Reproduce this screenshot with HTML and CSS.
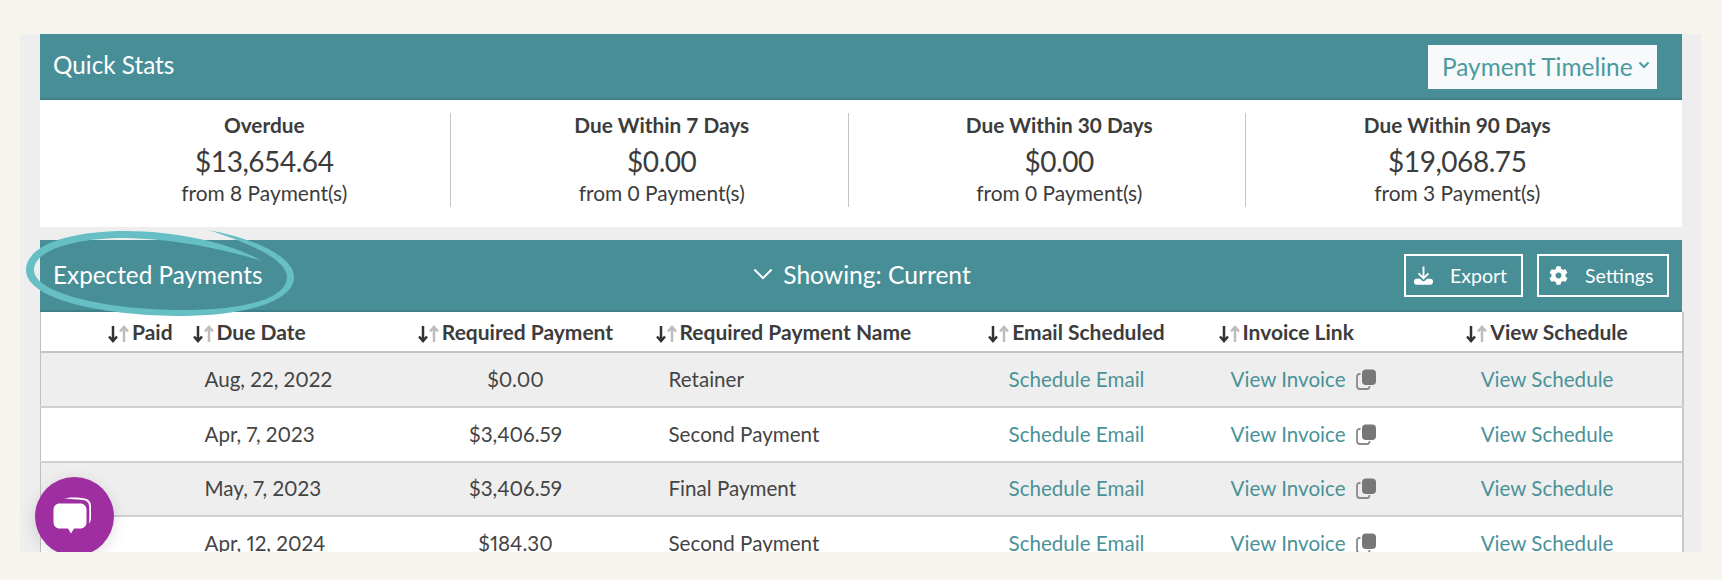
FILE: index.html
```html
<!DOCTYPE html>
<html lang="en">
<head>
<meta charset="utf-8">
<title>Quick Stats</title>
<link rel="stylesheet" href="styles.css">
</head>
<body>
<svg width="0" height="0" class="defs" aria-hidden="true">
  <symbol id="sort" viewBox="0 0 22 18">
    <path class="sort-down" d="M5 1v15M1 11.500 5 16l4-4.500"/>
    <path class="sort-up" d="M16 17V2M12 6.500 16 2l4 4.500"/>
  </symbol>
  <symbol id="copy" viewBox="0 0 21 21">
    <path class="copy-back" d="M4.500 5H3.500A2.500 2.500 0 0 0 1 7.500V17a3 3 0 0 0 3 3h7a2.500 2.500 0 0 0 2.500-2.500V17"/>
    <rect class="copy-front" x="6" y="0.500" width="14" height="15.500" rx="4"/>
  </symbol>
</svg>
<main class="panel">
  <section class="band band-stats">
    <h2 class="band-title">Quick Stats</h2>
    <button class="timeline">Payment Timeline
      <svg class="timeline-chevron" viewBox="0 0 12 8"><path d="M1.500 1.500 6 6l4.500-4.500"/></svg>
    </button>
  </section>
  <section class="stats">
    <div class="stat"><strong>Overdue</strong><span class="amount">$13,654.64</span><span class="from">from 8 Payment(s)</span></div>
    <div class="stat"><strong>Due Within 7 Days</strong><span class="amount">$0.00</span><span class="from">from 0 Payment(s)</span></div>
    <div class="stat"><strong>Due Within 30 Days</strong><span class="amount">$0.00</span><span class="from">from 0 Payment(s)</span></div>
    <div class="stat"><strong>Due Within 90 Days</strong><span class="amount">$19,068.75</span><span class="from">from 3 Payment(s)</span></div>
  </section>
  <section class="band band-payments">
    <h2 class="band-title">Expected Payments</h2>
    <div class="showing">
      <svg class="showing-chevron" viewBox="0 0 22 13"><path d="M1.500 1.500 11 11l9.500-9.500"/></svg>
      Showing: Current
    </div>
    <div class="actions">
      <button class="action action-export">
        <svg class="action-icon" viewBox="0 0 20 20"><path class="dl-arrow" d="M10 0.500V12.500M4.800 7.800 10 13l5.200-5.200"/><path class="dl-tray" d="M2.500 13.500H6.500C8 15.500 9 16 10 16s2-.5 3.500-2.500h4c1.300 0 2.500 1.100 2.500 2.800 0 2.200-1.200 3.400-2.500 3.400H2.500C1.200 19.700 0 18.500 0 16.300c0-1.700 1.200-2.800 2.500-2.800Z"/></svg>
        Export
      </button>
      <button class="action action-settings">
        <svg class="action-icon" viewBox="0 0 512 512"><path d="M487.400 315.700l-42.600-24.600c4.300-23.200 4.300-47 0-70.200l42.600-24.600c4.900-2.800 7.100-8.600 5.500-14-11.100-35.600-30-67.800-54.700-94.600-3.800-4.100-10-5.100-14.800-2.300L380.800 110c-17.900-15.400-38.500-27.300-60.800-35.100V25.800c0-5.600-3.900-10.500-9.400-11.700-36.700-8.200-74.300-7.800-109.200 0-5.500 1.200-9.400 6.100-9.400 11.700V75c-22.200 7.900-42.800 19.800-60.800 35.100L88.700 85.500c-4.900-2.800-11-1.900-14.800 2.300-24.700 26.700-43.600 58.900-54.700 94.600-1.700 5.400.6 11.200 5.500 14L67.300 221c-4.300 23.200-4.300 47 0 70.200l-42.600 24.600c-4.900 2.800-7.100 8.600-5.500 14 11.100 35.600 30 67.800 54.700 94.600 3.800 4.100 10 5.100 14.800 2.300l42.600-24.600c17.900 15.400 38.500 27.300 60.800 35.100v49.200c0 5.600 3.900 10.500 9.400 11.700 36.700 8.200 74.300 7.800 109.200 0 5.500-1.200 9.400-6.100 9.400-11.700v-49.200c22.200-7.900 42.800-19.800 60.800-35.100l42.600 24.600c4.900 2.800 11 1.900 14.800-2.300 24.700-26.700 43.600-58.900 54.700-94.600 1.500-5.500-.7-11.300-5.600-14.100zM256 336c-44.100 0-80-35.900-80-80s35.900-80 80-80 80 35.900 80 80-35.900 80-80 80z"/></svg>
        Settings
      </button>
    </div>
  </section>
  <table class="payments">
    <colgroup>
      <col class="c-paid"><col class="c-due"><col class="c-req"><col class="c-name"><col class="c-email"><col class="c-invoice"><col class="c-view">
    </colgroup>
    <thead>
      <tr>
        <th class="h-paid"><svg class="sort-icon"><use href="#sort"/></svg>Paid</th>
        <th class="h-due"><svg class="sort-icon"><use href="#sort"/></svg>Due Date</th>
        <th class="centered"><svg class="sort-icon"><use href="#sort"/></svg>Required Payment</th>
        <th class="h-name"><svg class="sort-icon"><use href="#sort"/></svg>Required Payment Name</th>
        <th class="centered"><svg class="sort-icon"><use href="#sort"/></svg>Email Scheduled</th>
        <th class="h-invoice"><svg class="sort-icon"><use href="#sort"/></svg>Invoice Link</th>
        <th class="centered"><svg class="sort-icon"><use href="#sort"/></svg>View Schedule</th>
      </tr>
    </thead>
    <tbody>
      <tr>
        <td></td><td class="d-due">Aug, 22, 2022</td><td class="centered">$0.00</td><td class="d-name">Retainer</td>
        <td class="centered"><a href="#">Schedule Email</a></td>
        <td class="d-invoice"><a href="#">View Invoice</a><svg class="copy-icon"><use href="#copy"/></svg></td>
        <td class="centered"><a href="#">View Schedule</a></td>
      </tr>
      <tr>
        <td></td><td class="d-due">Apr, 7, 2023</td><td class="centered">$3,406.59</td><td class="d-name">Second Payment</td>
        <td class="centered"><a href="#">Schedule Email</a></td>
        <td class="d-invoice"><a href="#">View Invoice</a><svg class="copy-icon"><use href="#copy"/></svg></td>
        <td class="centered"><a href="#">View Schedule</a></td>
      </tr>
      <tr>
        <td></td><td class="d-due">May, 7, 2023</td><td class="centered">$3,406.59</td><td class="d-name">Final Payment</td>
        <td class="centered"><a href="#">Schedule Email</a></td>
        <td class="d-invoice"><a href="#">View Invoice</a><svg class="copy-icon"><use href="#copy"/></svg></td>
        <td class="centered"><a href="#">View Schedule</a></td>
      </tr>
      <tr>
        <td></td><td class="d-due">Apr, 12, 2024</td><td class="centered">$184.30</td><td class="d-name">Second Payment</td>
        <td class="centered"><a href="#">Schedule Email</a></td>
        <td class="d-invoice"><a href="#">View Invoice</a><svg class="copy-icon"><use href="#copy"/></svg></td>
        <td class="centered"><a href="#">View Schedule</a></td>
      </tr>
    </tbody>
  </table>
  <svg class="scribble" viewBox="15 225 300 100" aria-hidden="true">
    <path d="M208 230C248 237 294 255 294 277C294 303 240 316 182 316C110 316 26 301 26 270C26 245 70 231 125 231C180 231 235 245 262 261C230 251 180 239 125 238C75 238 34 250 34 270C34 294 110 310 182 310C240 310 287 300 287 277C287 260 250 243 208 230Z"/>
  </svg>
  <div class="chat">
    <svg viewBox="0 0 44 44" aria-hidden="true">
      <path d="M11 3.500C16 2 26 2 32 3.500C36 4.500 38 7 38 11V22C38 25 37.500 27 36 28.500C36.500 24 36.500 15 36 10.500C35.500 7 33.500 5.500 30 5C24 4.200 16 4 11 3.500Z"/>
      <path d="M7 8.500H27C31 8.500 33.500 11 33.500 15V27C33.500 31 31 33.500 27 33.500H21L18 38.500 15 33.500H7C3 33.500 0.500 31 0.500 27V15C0.500 11 3 8.500 7 8.500Z"/>
    </svg>
  </div>
</main>
</body>
</html>
```
FILE: styles.css
```css
* { box-sizing: border-box; }
html, body { margin: 0; height: 100%; }
body {
  background: #f7f3ed;
  font-family: Lato, "Open Sans", sans-serif;
  color: #3c3c3c;
  padding: 34px 0 0 20px;
  overflow: hidden;
}
.defs { position: absolute; }
.panel {
  position: relative;
  width: 1681px;
  height: 518px;
  padding: 0 19px 0 20px;
  background: #eeeeee;
  overflow: hidden;
}
.band {
  background: #488e97;
  color: #fff;
}
.band-title {
  margin: 0;
  font-size: 24.300px;
  font-weight: 400;
  line-height: 30px;
}
.band-stats {
  height: 66px;
  padding: 10px 25px 10px 13px;
  display: flex;
  justify-content: space-between;
  align-items: center;
  border-bottom: 2px solid #3f7f88;
}
.band-stats .band-title { margin-top: -3px; }
.timeline {
  width: 229px;
  height: 44px;
  padding: 0 0 0 14px;
  margin-top: 1px;
  display: flex;
  align-items: center;
  border: 0;
  background: #f8f9fa;
  color: #4a9ba0;
  font: 400 24.400px Lato, sans-serif;
  white-space: nowrap;
}
.timeline-chevron {
  width: 12px;
  height: 8px;
  margin: -3px 0 0 5px;
  fill: none;
  stroke: #4a9ba0;
  stroke-width: 2;
}
.stats {
  height: 127px;
  padding: 13px 40px 0 13.500px;
  background: #fff;
  display: grid;
  grid-template-columns: repeat(4, 397.500px);
  align-items: start;
}
.stat {
  height: 94px;
  padding-left: 25px;
  border-right: 1px solid #c4c4c4;
  display: flex;
  flex-direction: column;
  align-items: center;
  text-align: center;
}
.stat:last-child { border-right: 0; }
.stat strong {
  font-size: 20.800px;
  font-weight: 700;
  line-height: 26px;
  margin-top: -1px;
}
.amount {
  font-size: 28px;
  letter-spacing: -0.450px;
  line-height: 38px;
  margin-top: 4px;
}
.from {
  font-size: 20.900px;
  line-height: 26px;
}
.band-payments {
  margin-top: 13px;
  height: 72px;
  padding: 0 13px 0 13px;
  display: grid;
  grid-template-columns: 1fr auto 1fr;
  align-items: center;
  border-bottom: 2px solid #3f7f88;
  position: relative;
}
.showing {
  display: flex;
  align-items: center;
  gap: 10px;
  font-size: 24.600px;
  margin-top: -2px;
  margin-left: 2px;
}
.showing-chevron {
  width: 20px;
  height: 12px;
  fill: none;
  stroke: #fff;
  stroke-width: 2.200;
}
.actions {
  display: flex;
  justify-content: flex-end;
  gap: 14px;
}
.action {
  height: 43px;
  display: flex;
  align-items: center;
  gap: 17px;
  border: 2px solid #fff;
  background: transparent;
  color: #fff;
  font: 400 19.500px Lato, sans-serif;
}
.action-export { width: 119px; padding: 0 0 0 8px; }
.action-settings { width: 132px; padding: 0 0 0 10px; }
.action-icon { width: 19px; height: 19px; fill: #fff; flex: none; }
.dl-arrow { fill: none; stroke: #fff; stroke-width: 2; }
.payments {
  width: 1642px;
  border-collapse: collapse;
  table-layout: fixed;
  font-size: 20.600px;
  font-variant-numeric: proportional-nums;
  background: #fff;
  border-left: 1px solid #c0c0c0;
  border-right: 2px solid #c8c8c8;
}
.c-paid { width: 142px; }
.c-due { width: 193px; }
.c-req { width: 280px; }
.c-name { width: 295px; }
.c-email { width: 252px; }
.c-invoice { width: 210px; }
.c-view { width: 270px; }
.payments th {
  height: 40px;
  padding: 0 0 1px;
  font-size: 21px;
  font-weight: 700;
  color: #3c3c3c;
  text-align: left;
  white-space: nowrap;
  border-bottom: 2px solid #c4c4c4;
}
.payments td {
  height: 55px;
  padding: 0 0 2px;
  color: #444;
  white-space: nowrap;
  border-bottom: 2px solid #d0d0d0;
}
.payments tbody tr:nth-child(3) td { height: 54px; }
.payments tbody tr:nth-child(odd) { background: #eeeeee; }
.payments .centered { text-align: center; }
.h-paid { padding-left: 67px !important; }
.h-due { padding-left: 10px !important; }
.h-name { padding-left: 0 !important; }
.h-invoice { padding-left: 16px !important; }
.d-due { padding-left: 22px !important; }
.d-name { padding-left: 13px !important; }
.d-invoice { padding-left: 28px !important; }
.payments a { color: #4a9298; text-decoration: none; }
.sort-icon {
  width: 22px;
  height: 18px;
  margin-right: 2px;
  vertical-align: -3px;
}
.sort-down { fill: none; stroke: #333; stroke-width: 2.500; }
.sort-up { fill: none; stroke: #bdbdbd; stroke-width: 2.500; }
.copy-icon {
  width: 21px;
  height: 21px;
  margin-left: 10px;
  vertical-align: -3px;
}
.copy-back { fill: none; stroke: #8a8a8a; stroke-width: 1.800; }
.copy-front { fill: #777; }
.scribble {
  position: absolute;
  left: -5px;
  top: 191px;
  width: 300px;
  height: 100px;
  fill: #66bfc4;
}
.chat {
  position: absolute;
  left: 15px;
  top: 443px;
  width: 79px;
  height: 79px;
  border-radius: 50%;
  background: #9f2fa0;
  box-shadow: 0 4px 16px rgba(0, 0, 0, 0.12);
  display: flex;
  align-items: center;
  justify-content: center;
}
.chat svg { width: 44px; height: 44px; fill: #fff; margin: 0 0 -1px 0; }
```
